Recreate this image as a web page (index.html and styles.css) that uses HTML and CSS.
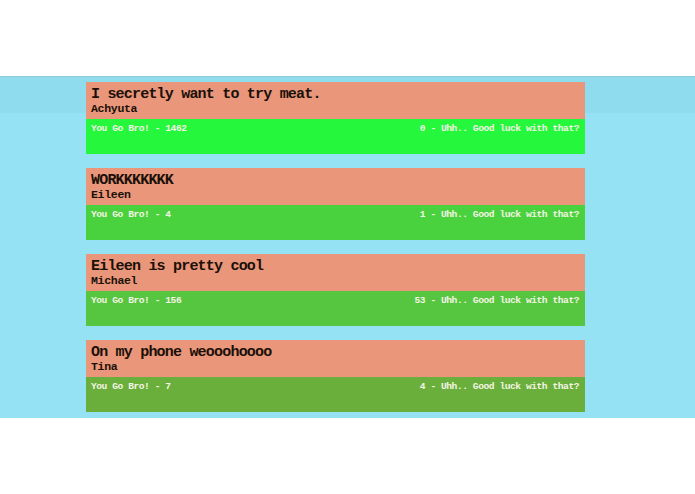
FILE: index.html
```html
<!DOCTYPE html>
<html>
<head>
<meta charset="utf-8">
<link rel="stylesheet" href="styles.css">
</head>
<body>
<div class="spacer"></div>
<main class="band">
  <div class="topstrip"></div>
  <div class="list">
    <div class="card">
      <div class="head">
        <div class="title">I secretly want to try meat.</div>
        <div class="author">Achyuta</div>
      </div>
      <div class="votes g1">
        <span>You Go Bro! - 1462</span>
        <span>0 - Uhh.. Good luck with that?</span>
      </div>
    </div>
    <div class="card">
      <div class="head">
        <div class="title">WORKKKKKKK</div>
        <div class="author">Eileen</div>
      </div>
      <div class="votes g2">
        <span>You Go Bro! - 4</span>
        <span>1 - Uhh.. Good luck with that?</span>
      </div>
    </div>
    <div class="card">
      <div class="head">
        <div class="title">Eileen is pretty cool</div>
        <div class="author">Michael</div>
      </div>
      <div class="votes g3">
        <span>You Go Bro! - 156</span>
        <span>53 - Uhh.. Good luck with that?</span>
      </div>
    </div>
    <div class="card">
      <div class="head">
        <div class="title">On my phone weooohoooo</div>
        <div class="author">Tina</div>
      </div>
      <div class="votes g4">
        <span>You Go Bro! - 7</span>
        <span>4 - Uhh.. Good luck with that?</span>
      </div>
    </div>
  </div>
</main>
</body>
</html>
```
FILE: styles.css
```css
html, body {
  margin: 0;
  padding: 0;
  background: #ffffff;
  font-family: "Liberation Mono", "DejaVu Sans Mono", monospace;
}
.spacer {
  height: 76px;
}
.band {
  position: relative;
  background: #94e2f4;
  border-top: 1px solid #8ccbdc;
  height: 341px;
}
.topstrip {
  position: absolute;
  left: 0;
  right: 0;
  top: 0;
  height: 36px;
  background: #8fdcef;
}
.list {
  position: relative;
  display: flex;
  flex-direction: column;
  gap: 14px;
  padding-top: 5px;
  margin-left: 86px;
  width: 499px;
}
.card {
  display: flex;
  flex-direction: column;
}
.head {
  background: #e9967a;
  height: 37px;
  box-sizing: border-box;
  padding: 5px 5px 0;
  color: #1a1008;
}
.title {
  font-size: 15px;
  font-weight: bold;
  letter-spacing: -0.8px;
  line-height: 16px;
}
.author {
  font-size: 11.5px;
  font-weight: bold;
  letter-spacing: -0.3px;
  line-height: 11px;
}
.votes {
  height: 35px;
  box-sizing: border-box;
  padding: 4px 6px 0 5px;
  display: flex;
  justify-content: space-between;
  color: #f4f4e4;
  font-size: 9.6px;
  font-weight: bold;
  letter-spacing: -0.45px;
  line-height: 11px;
}
.g1 { background: #25f73d; }
.g2 { background: #4ad23e; }
.g3 { background: #56c641; }
.g4 { background: #6aaf3b; }
```
